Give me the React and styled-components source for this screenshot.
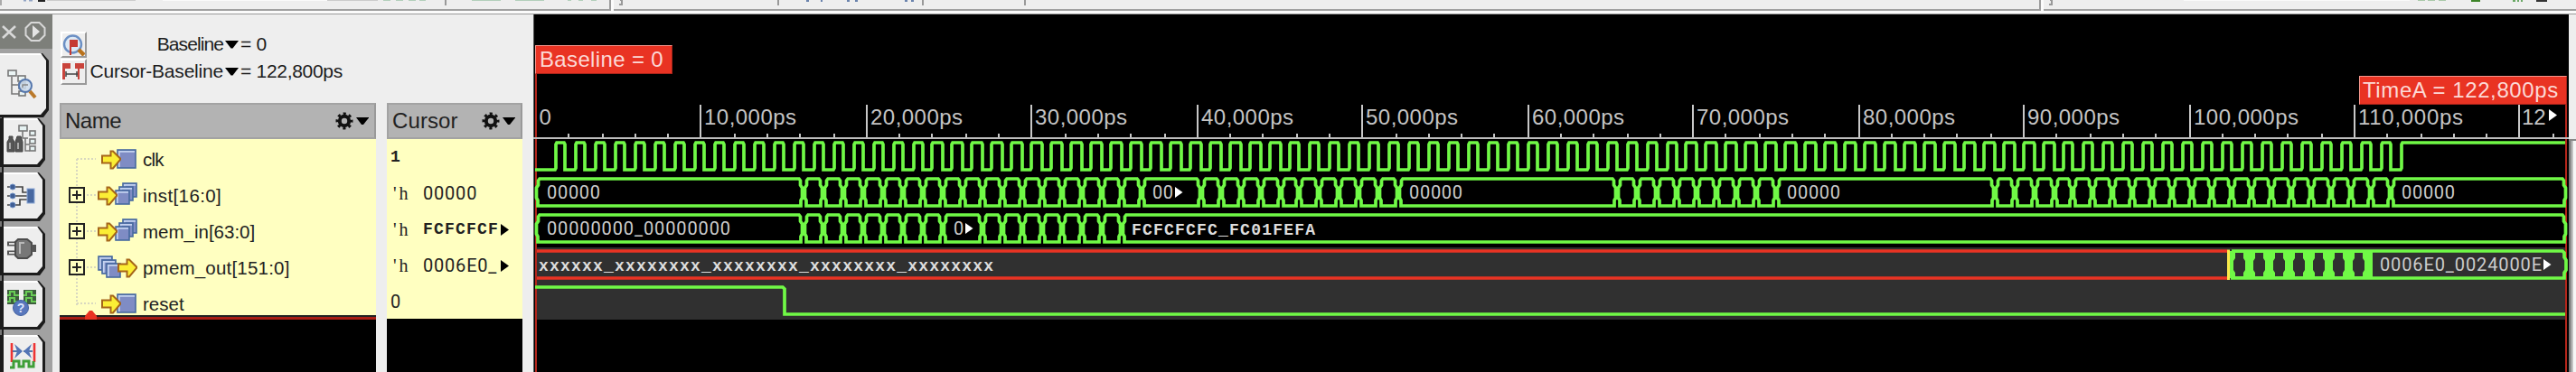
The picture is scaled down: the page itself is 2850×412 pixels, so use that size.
import React from 'react';
import styled, { createGlobalStyle } from 'styled-components';

const sans = '"Liberation Sans", Arial, sans-serif';
const slab = '"Liberation Mono", "Courier New", monospace';
const GREEN = '#70f946';
const RED = '#e93323';

const GlobalStyle = createGlobalStyle`
  body { margin: 0; background: #eee; overflow: hidden; }
  * { box-sizing: border-box; }
  svg { display: block; flex: none; }
`;

const Window = styled.div`
  width: 2850px;
  height: 412px;
  display: flex;
  flex-direction: column;
  background: #eee;
  font-family: ${sans};
  overflow: hidden;
`;

const Toolbar = styled.div`
  height: 16px;
  flex: none;
  display: flex;
  gap: 3px;
  background: #fbfbfb;
  border-bottom: 1px solid #9a9a9a;
`;
const ToolGroup = styled.div`
  width: ${(p) => p.$width}px;
  flex: none;
  height: 12px;
  background: #eee;
  border-bottom: 2px solid #a0a0a0;
  border-right: 2px solid #9c9c9c;
  overflow: hidden;
`;

const Main = styled.div`
  flex: 1;
  min-height: 0;
  display: flex;
`;

/* Side tabs */
const SideBar = styled.div`
  width: 58px;
  flex: none;
  background: #a2a2a2;
  display: flex;
  flex-direction: column;
`;
const SideHead = styled.div`
  height: 38px;
  flex: none;
  background: #7d7f7a;
`;
const SideTab = styled.div`
  position: relative;
  flex: none;
  width: ${(p) => (p.$active ? 54 : 50)}px;
  height: ${(p) => (p.$active ? 71 : 54)}px;
  margin: ${(p) => (p.$active ? '5px 0 0' : '0 0 6px')};
  padding: ${(p) => p.$inset}px 0 0 7px;
  background: #1c1c1c;
  clip-path: polygon(0 0, calc(100% - 7px) 0, 100% 8px, 100% calc(100% - 8px), calc(100% - 6px) 100%, 0 100%);
  &::before {
    content: '';
    position: absolute;
    inset: 0 3px 3px ${(p) => (p.$active ? 0 : 4)}px;
    background: #eee;
    border-top: 2px solid #fff;
    clip-path: polygon(0 0, calc(100% - 6px) 0, 100% 8px, 100% calc(100% - 7px), calc(100% - 6px) 100%, 0 100%);
  }
  svg { position: relative; }
`;
const TabStack = styled.div`
  display: flex;
  flex-direction: column;
  padding-top: 1px;
  background: linear-gradient(90deg, #777 2px, #1c1c1c 2px, #1c1c1c 4px, transparent 4px);
  height: 290px;
`;

/* Signal columns */
const Signals = styled.div`
  width: 532px;
  flex: none;
  padding-left: 8px;
  display: flex;
  flex-direction: column;
`;
const Readouts = styled.div`
  height: 98px;
  flex: none;
  padding: 18px 0 0 1px;
`;
const Readout = styled.div`
  height: 30px;
  display: flex;
  align-items: center;
  font-size: 21px;
  line-height: 24px;
  color: #1c1c1c;
`;
const ReadoutButton = styled.div`
  width: 29px;
  height: 29px;
  flex: none;
  background: #eee;
  border: 2px solid;
  border-color: #fff #999 #999 #fff;
`;
const ReadoutName = styled.div`
  width: 151px;
  flex: none;
  text-align: right;
  letter-spacing: ${(p) => p.$track}px;
  margin-right: 2px;
  white-space: nowrap;
`;
const ReadoutValue = styled.div`
  padding: 0 0 0 2px;
  letter-spacing: -0.3px;
  white-space: pre;
`;
const Columns = styled.div`
  flex: 1;
  display: flex;
  gap: 12px;
`;
const Column = styled.div`
  width: ${(p) => p.$width}px;
  display: flex;
  flex-direction: column;
  background: #000;
`;
const ColumnHead = styled.div`
  height: 40px;
  flex: none;
  padding: 0 6px 0 4px;
  display: flex;
  align-items: center;
  justify-content: space-between;
  background: #b3b3b3;
  border: 2px solid #a3a3a3;
  border-right-color: #999;
  font-size: 24px;
  letter-spacing: ${(p) => p.$track}px;
  color: #222;
`;
const NameBody = styled.div`
  height: 200px;
  background: #ffffc1;
  border-bottom: 3px solid #a91d14;
  box-shadow: inset 0 -2px 0 #222;
  position: relative;
`;
const TreeLine = styled.div`
  position: absolute;
  left: 18px;
  top: 22px;
  height: 162px;
  border-left: 2px dotted #d8d8c0;
`;
const InsertMark = styled.div`
  position: absolute;
  left: 28px;
  bottom: -3px;
  width: 13px;
  height: 10px;
  background: ${RED};
  clip-path: polygon(0 60%, 38% 0, 62% 0, 100% 60%, 100% 100%, 0 100%);
`;
const NameRow = styled.div`
  height: 40px;
  position: relative;
  display: flex;
  align-items: center;
  padding-left: 10px;
  padding-top: 4px;
  font-size: 20.5px;
  letter-spacing: ${(p) => p.$track || 0}px;
  color: #222;
`;
const SignalName = styled.span`
  margin-left: 6px;
  padding-top: 1px;
`;
const ValueBody = styled.div`
  height: 199px;
  background: #ffffc1;
`;
const ValueRow = styled.div`
  height: 40px;
  padding: 10px 0 0 4px;
  display: flex;
  align-items: flex-start;
  font-family: ${(p) => (p.$slab ? slab : 'Roboto, sans-serif')};
  font-weight: ${(p) => (p.$slab ? 700 : 400)};
  font-size: ${(p) => (p.$slab ? 18 : 20)}px;
  letter-spacing: ${(p) => (p.$slab ? 1.2 : 0.8)}px;
  line-height: 20px;
  color: #222;
`;
const Radix = styled.span`
  width: 36px;
  flex: none;
  padding-left: 3px;
  letter-spacing: 3px;
  font-family: "Liberation Serif", serif;
  font-size: 20px;
  font-weight: 400;
`;
const Digits = styled.span`
  width: 85px;
  flex: none;
`;

/* Waveform pane */
const WavePane = styled.div`
  width: 2252px;
  flex: none;
  height: 396px;
  position: relative;
  padding-top: 100px;
  background: #000;
  border-left: 1px solid #555;
`;
const Plot = styled.svg`
  position: relative;
  overflow: visible;
  margin-left: -1px;
`;
const Flag = styled.div`
  position: absolute;
  left: ${(p) => p.$left}px;
  top: ${(p) => p.$top}px;
  width: ${(p) => p.$width}px;
  height: 32px;
  padding-left: ${(p) => p.$pad}px;
  background: ${RED};
  border: 1px solid;
  border-color: #f6968d #a8241a #a8241a #f6968d;
  color: #fcd9d6;
  font-size: 24px;
  line-height: 29px;
  letter-spacing: ${(p) => p.$track}px;
  white-space: nowrap;
`;
const MarkerLine = styled.div`
  position: absolute;
  left: ${(p) => p.$left}px;
  top: ${(p) => p.$top}px;
  bottom: 0;
  width: 2px;
  background: #b5261b;
`;
const RightEdge = styled.div`
  flex: 1;
  padding-top: 138px;
  background: #eee;
`;
const ScrollTrack = styled.div`
  height: 260px;
  border-top: 2px solid #888;
  background: linear-gradient(90deg, #777 0 2px, #aaa 2px 4px, #f6f6f6 5px);
`;

/* Icons */
const Down = () => (
  <svg width="15" height="9"><path d="M0 0H15L8.5 8.5H6.5Z" fill="#000" /></svg>
);
const Gear = () => (
  <svg width="37" height="20" viewBox="0 0 37 20">
    <circle cx="10" cy="10" r="5.2" fill="none" stroke="#111" strokeWidth="4" />
    <circle cx="10" cy="10" r="8.1" fill="none" stroke="#111" strokeWidth="2.8" strokeDasharray="3.1 3.26" strokeDashoffset="1.55" />
    <path d="M23 6H37.5L31 14H29Z" fill="#000" />
  </svg>
);
const MoreMark = styled.svg`
  margin: 4px 0 0 1px;
`;
const More = () => (
  <MoreMark width="9" height="13" viewBox="0 0 9 13"><path d="M0 0L9 6.5L0 13Z" fill="#000" /></MoreMark>
);
const Expander = () => (
  <svg width="18" height="18">
    <rect x="0" y="0" width="18" height="18" fill="#ffffc1" />
    <rect x="1" y="1" width="16" height="16" fill="none" stroke="#222" strokeWidth="2" />
    <path d="M4 9H14M9 4V14" stroke="#222" strokeWidth="2" />
  </svg>
);
const Arrow = ({ x }) => (
  <path transform={`translate(${x} 4)`} d="M1 6.5H10.5V1.5H13L21 9.5V11L13 20.5H10.5V14.5H1Z" fill="#fbee35" stroke="#a5651a" strokeWidth="2" />
);
const Pane = ({ x, y, s = 15 }) => (
  <g>
    <rect x={x} y={y} width={s} height={s} fill="#7f8cc4" stroke="#46699f" strokeWidth="1.6" />
    <path d={`M${x + 1.8} ${y + s - 1}V${y + 1.8}H${x + s - 1}`} stroke="#c3d2f0" strokeWidth="1.8" fill="none" />
  </g>
);
const SignalIcon = ({ kind }) => (
  <svg width="46" height="28" viewBox="0 0 46 28">
    {kind === 'in' && <><Pane x={24} y={4} s={20} /><Arrow x={6} /></>}
    {kind === 'vin' && <><Pane x={30} y={1} /><Pane x={26} y={5} /><Pane x={22} y={9} /><Arrow x={2} /></>}
    {kind === 'vout' && <><Pane x={3} y={2} /><Pane x={7} y={6} /><Pane x={12} y={10} /><Arrow x={24} /></>}
  </svg>
);

const TreeFind = () => (
  <svg width="34" height="34" viewBox="0 0 34 34" fill="none">
    <path d="M6 8V27H14M6 17H14" stroke="#777" strokeWidth="1.6" />
    <g fill="#eaf4f4" stroke="#777" strokeWidth="1.6"><rect x="2" y="1" width="9" height="6" /><rect x="13" y="7" width="8" height="6" /><rect x="14" y="15" width="7" height="6" /><rect x="14" y="24" width="7" height="5" /></g>
    <circle cx="21" cy="18" r="7" fill="#cddcec" fillOpacity=".85" stroke="#5577ad" strokeWidth="2" />
    <path d="M18 20V17H24" stroke="#888" strokeWidth="1.5" />
    <path d="M26 24L32 31" stroke="#ba792a" strokeWidth="4" />
  </svg>
);
const Binoculars = () => (
  <svg width="34" height="34" viewBox="0 0 34 34">
    <path d="M3 14H7V17L9 20V31H1V20L3 17ZM12 14H16L18 20V31H10V20Z" fill="#555" stroke="#444" />
    <path d="M4 21V28M13 21V28" stroke="#aaa" strokeWidth="2" />
    <path d="M18 8V16H24M21 16V30H26M21 23H26" stroke="#777" strokeWidth="1.6" fill="none" />
    <g fill="#e6f2f2" stroke="#777" strokeWidth="1.6"><rect x="14" y="2" width="9" height="6" /><rect x="26" y="8" width="6" height="5" /><rect x="26" y="17" width="6" height="5" /><rect x="26" y="25" width="6" height="5" /></g>
  </svg>
);
const Wiring = () => (
  <svg width="34" height="46" viewBox="0 0 34 46">
    <g stroke="#444" strokeWidth="1.7" fill="none"><path d="M1 7H18V13H24M1 17H24M1 27H15V21H24" /></g>
    <g fill="#3f5e94" stroke="#6e8fc4"><circle cx="7" cy="7" r="3" /><circle cx="7" cy="17" r="3" /><circle cx="7" cy="27" r="3" /></g>
    <rect x="23" y="9" width="8" height="16" fill="#4868a0" stroke="#8ba8d6" />
  </svg>
);
const Plug = () => (
  <svg width="34" height="34" viewBox="0 0 34 34">
    <path d="M1 8H11M1 18H11" stroke="#555" strokeWidth="5" /><path d="M3 8H10M3 18H10" stroke="#ddd" strokeWidth="1.8" />
    <path d="M13 3H23L28 7V20L23 24H13L10 21V6Z" fill="#777" stroke="#4b4b4b" strokeWidth="2" />
    <path d="M15 19V7H20" stroke="#b9b9b9" fill="none" strokeWidth="2" /><rect x="28" y="9" width="5" height="8" fill="#555" />
  </svg>
);
const WaveHelp = () => (
  <svg width="34" height="34" viewBox="0 0 34 34">
    <path d="M1 3H14V19H1ZM19 3H33V19H19Z" fill="#3d5d3d" />
    <path d="M1 9H4V5H9V9H14M1 16H4V12H9V16H14M19 9H22V5H28V9H33M19 16H22V12H28V16H33" stroke="#68cb55" strokeWidth="2" fill="none" />
    <circle cx="16" cy="23" r="8.5" fill="#5877bd" stroke="#4060a0" />
    <text x="16" y="28" fontSize="14" fontWeight="700" textAnchor="middle" fill="#dbe6ff" fontFamily={sans}>?</text>
  </svg>
);
const WaveFit = () => (
  <svg width="34" height="34" viewBox="0 0 34 34" fill="none">
    <path d="M6 3V24M31 3V24" stroke="#e33" strokeWidth="2.6" />
    <path d="M7 12H17M19 12H29" stroke="#57a" strokeWidth="2" />
    <path d="M9 4L18 12L9 20L12 12ZM28 4L19 12L28 20L25 12Z" fill="#5374b5" />
    <path d="M4 30H8V23H14V29H19V23H25V29H30V23" stroke="#3f9f38" strokeWidth="3" />
  </svg>
);

/* Time axis: positions snap to a two pixel grid */
const at = (ps) => 593 + 2 * Math.round(ps * 0.009145);
const END = 2840;
const steps = (from, to) => {
  const out = [];
  for (let t = from; t <= to; t += 1200) out.push(t);
  return out;
};

const clockPath = () => {
  let d = 'M592 34';
  for (let k = 1; k <= 94; k++) {
    const r = at(1200 * k);
    d += `H${r - 1}L${r} 32V6L${r + 1} 4`;
    if (k < 94) {
      const f = at(1200 * k + 600);
      d += `H${f - 1}L${f} 6V34`;
    }
  }
  return `${d}H2838`;
};
const cell = (a, b) =>
  `M${a + 5} 4L${a + 3.5} 6V11L${a + 1.5} 14V25L${a + 3} 28V34H${b - 3}V28L${b - 1.5} 25V14L${b - 3.5} 11V6L${b - 5} 4Z`;
const busPath = (times) => {
  const xs = [592, ...times.map(at), END];
  return xs.slice(1).map((x, i) => cell(xs[i], x)).join('');
};

const Trace = styled.path`
  fill: none;
  stroke: ${(p) => p.$color || GREEN};
  stroke-width: 3.7;
`;
const Row = ({ children, shaded }) => (
  <Plot width="2252" height="40" viewBox="590 0 2252 40">
    {shaded && <rect x="594" y="0" width="2244" height="40" fill="#303030" />}
    {children}
  </Plot>
);
const Val = ({ x, text, more, bold, y = 25.5 }) => (
  <>
    <text
      x={x} y={y} fill={bold ? '#ddd' : '#ccc'}
      fontFamily={bold ? slab : 'Roboto, sans-serif'}
      fontWeight={bold ? 700 : 400} fontSize={bold ? 18 : 20}
      textLength={text.length * 12 - 1}
    >{text}</text>
    {more && <path d={`M${x + text.length * 12 + 1} 13l8.5 6l-8.5 6z`} fill="#fff" />}
  </>
);

const instTimes = [...steps(16200, 36600), ...steps(40200, 52200), ...steps(65400, 75000), ...steps(88200, 112200)];
const memTimes = [...steps(16200, 24600), ...steps(27000, 35400)];
const outCells = [0, 1, 2, 3, 4, 5, 6].map((k) => 2471 + 22 * k);
const ticks = Array.from({ length: 61 }, (_, i) => (i + 1) * 2000);

const Ruler = () => (
  <Plot width="2252" height="38" viewBox="590 116 2252 38" fontFamily={sans} fontSize="24" fill="#c4c4c4">
    <rect x="590" y="152" width="2252" height="2" fill="#bdbdbd" />
    {ticks.map((t) => (
      <rect key={t} x={at(t) - 1} y={t % 10000 ? 148 : 116} width="2" height={t % 10000 ? 4 : 36} fill="#c8c8c8" />
    ))}
    <text x="596.5" y="138">0</text>
    {ticks.filter((t) => t % 10000 === 0 && t < 120000).map((t) => (
      <text key={t} x={at(t) + 4} y="138" textLength={t < 100000 ? 102 : 116}>{t.toLocaleString('en-US')}ps</text>
    ))}
    <text x="2790" y="138">12</text>
    <path d="M2820 121L2829 127.5L2820 134Z" fill="#fff" />
  </Plot>
);

const names = [
  { name: 'clk', kind: 'in', track: -0.8 },
  { name: 'inst[16:0]', kind: 'vin', track: 0.4 },
  { name: 'mem_in[63:0]', kind: 'vin', track: 0 },
  { name: 'pmem_out[151:0]', kind: 'vout', track: 0.2 },
  { name: 'reset', kind: 'in', track: 0 },
];

export default function App() {
  return (
    <Window>
      <GlobalStyle />
      <Toolbar>
        <ToolGroup $width={676}>
          <svg width="677" height="10">
            <path d="M0 0H2V6H0Z" fill="#aaa" />
            <path d="M26 0H29V1.5H26ZM32 0H36V1.5H32Z" fill="#91a4c4" />
            <path d="M42 0H50V2H42Z" fill="#222" />
            <path d="M52 0H150V1H52ZM362 0H418V1H362Z" fill="#ccc" />
            <path d="M180 0H362V1H180Z" fill="#fafafa" />
            <path d="M424 0h8v1h-8zM438 0h8v1h-8zM452 0h8v1h-8zM464 0h7v1h-7zM522 0h32v1h-32zM570 0h32v1h-32zM628 0h4v1h-4zM640 0h5v1h-5zM654 0h6v1h-6z" fill="#b3cfbb" />
            <path d="M492 0H494V6H492Z" fill="#999" />
          </svg>
        </ToolGroup>
        <ToolGroup $width={1579}>
          <svg width="1578" height="10">
            <path d="M7 0H9V5H6" stroke="#999" strokeWidth="2" fill="none" />
            <path d="M181 0h2v6h-2zM341 0h2v6h-2zM454 0h2v6h-2z" fill="#999" />
            <path d="M213 0h3v2h-3zM229 0h2v2h-2zM258 0h3v2h-3zM267 0h3v2h-3zM322 0h3v2h-3zM329 0h3v2h-3z" fill="#6a83ad" />
          </svg>
        </ToolGroup>
        <ToolGroup $width={600}>
          <svg width="600" height="10">
            <path d="M7 0H9V5H6" stroke="#999" strokeWidth="2" fill="none" />
            <path d="M155 0H405V1H155Z" fill="#fafafa" />
            <path d="M414 0h8v1h-8zM425 0h8v1h-8zM437 0h8v1h-8z" fill="#a9c9a9" />
            <path d="M473 0h10v2h-10z" fill="#3d8428" />
            <path d="M519 0h3v2h-3zM524 0h2v2h-2zM528 0h2v2h-2z" fill="#6aa865" />
            <path d="M545 0h12v2h-12z" fill="#333" />
          </svg>
        </ToolGroup>
      </Toolbar>
      <Main>
        <SideBar>
          <SideHead>
            <svg width="58" height="38" fill="none" stroke="#d8d8d8" strokeWidth="2.6">
              <path d="M3 13L17 26M17 13L3 26" />
              <path d="M34.5 9H43.5L49.5 15V23L43.5 29H34.5L28.5 23V15Z" strokeWidth="2" />
              <path d="M36 12L44 19L36 26Z" fill="#e4e4e4" stroke="none" />
            </svg>
          </SideHead>
          <SideTab $active $inset={18}><TreeFind /></SideTab>
          <TabStack>
            <SideTab $inset={6}><Binoculars /></SideTab>
            <SideTab $inset={9}><Wiring /></SideTab>
            <SideTab $inset={11}><Plug /></SideTab>
            <SideTab $inset={7}><WaveHelp /></SideTab>
            <SideTab $inset={6}><WaveFit /></SideTab>
          </TabStack>
        </SideBar>
        <Signals>
          <Readouts>
            <Readout>
              <ReadoutButton>
                <svg width="25" height="25">
                  <circle cx="11.5" cy="12" r="9.5" fill="#dde9f5" stroke="#6b8fc4" strokeWidth="2.4" />
                  <path d="M9 24V8H16V14H10" fill="#c53a32" stroke="#c53a32" strokeWidth="2" />
                  <path d="M18 18L24 24" stroke="#b9721d" strokeWidth="4.5" />
                </svg>
              </ReadoutButton>
              <ReadoutName $track={-0.9}>Baseline</ReadoutName>
              <Down />
              <ReadoutValue>= 0</ReadoutValue>
            </Readout>
            <Readout>
              <ReadoutButton>
                <svg width="25" height="25" fill="#c9443c">
                  <path d="M0 3H9V9H3V21H0ZM14 3H24V9H19V21H17V9H14Z" />
                  <path d="M4 15H17M4 12V18M16 12V18" stroke="#444" strokeWidth="1.5" />
                </svg>
              </ReadoutButton>
              <ReadoutName $track={-0.2}>Cursor-Baseline</ReadoutName>
              <Down />
              <ReadoutValue>= 122,800ps</ReadoutValue>
            </Readout>
          </Readouts>
          <Columns>
            <Column $width={350}>
              <ColumnHead $track={-0.5}>Name<Gear /></ColumnHead>
              <NameBody>
                <TreeLine />
                {names.map((n) => (
                  <NameRow key={n.name} $track={n.track}>
                    {n.kind === 'in' ? (
                      <svg width="30" height="18"><path d="M9 9H30" stroke="#d8d8c0" strokeWidth="2" strokeDasharray="2 2" /></svg>
                    ) : (
                      <>
                        <Expander />
                        <svg width="12" height="18"><path d="M2 9H12" stroke="#d8d8c0" strokeWidth="2" strokeDasharray="2 2" /></svg>
                      </>
                    )}
                    <SignalIcon kind={n.kind} />
                    <SignalName>{n.name}</SignalName>
                  </NameRow>
                ))}
                <InsertMark />
              </NameBody>
            </Column>
            <Column $width={150}>
              <ColumnHead $track={0.1}>Cursor<Gear /></ColumnHead>
              <ValueBody>
                <ValueRow $slab>1</ValueRow>
                <ValueRow><Radix>'h</Radix>00000</ValueRow>
                <ValueRow $slab><Radix>'h</Radix><Digits>FCFCFCF</Digits><More /></ValueRow>
                <ValueRow><Radix>'h</Radix><Digits>0006E0_</Digits><More /></ValueRow>
                <ValueRow>0</ValueRow>
              </ValueBody>
            </Column>
          </Columns>
        </Signals>
        <WavePane>
          <MarkerLine $left={1} $top={66} />
          <MarkerLine $left={2247} $top={100} />
          <Ruler />
          <Row><Trace d={clockPath()} /></Row>
          <Row>
            <Trace d={busPath(instTimes)} />
            <Val x={605} text="00000" />
            <Val x={1275} text="00" more />
            <Val x={1559} text="00000" />
            <Val x={1977} text="00000" />
            <Val x={2657} text="00000" />
          </Row>
          <Row>
            <Trace d={busPath(memTimes)} />
            <Val x={605} text="00000000_00000000" />
            <Val x={1055} text="0" more />
            <Val x={1252} text="FCFCFCFC_FC01FEFA" bold />
          </Row>
          <Row shaded>
            <Trace $color={RED} d="M594 4H2464M594 34H2464" />
            <Val x={596} text="xxxxxx_xxxxxxxx_xxxxxxxx_xxxxxxxx_xxxxxxxx" bold />
            <rect x="2467" y="4" width="158" height="30" fill={GREEN} />
            {outCells.map((x) => (
              <path key={x} d={`M${x + 2} 6H${x + 11}V12L${x + 13} 15V25L${x + 11} 28V32H${x + 2}V28L${x} 25V15L${x + 2} 12Z`} fill="#303030" />
            ))}
            <path d="M2465.5 2.5V36" stroke="#fbe94b" strokeWidth="3" />
            <Trace d="M2469 4H2835L2837 6V11L2839 14V25L2837 28V34H2468" />
            <Val x={2633} text="0006E0_0024000E" more />
          </Row>
          <Row shaded><Trace d="M592 4H866L868 6V34H2838" /></Row>
          <Flag $left={1} $top={34} $width={152} $pad={4} $track={0.35}>Baseline = 0</Flag>
          <Flag $left={2019} $top={68} $width={230} $pad={3} $track={0.6}>TimeA = 122,800ps</Flag>
        </WavePane>
        <RightEdge><ScrollTrack /></RightEdge>
      </Main>
    </Window>
  );
}
